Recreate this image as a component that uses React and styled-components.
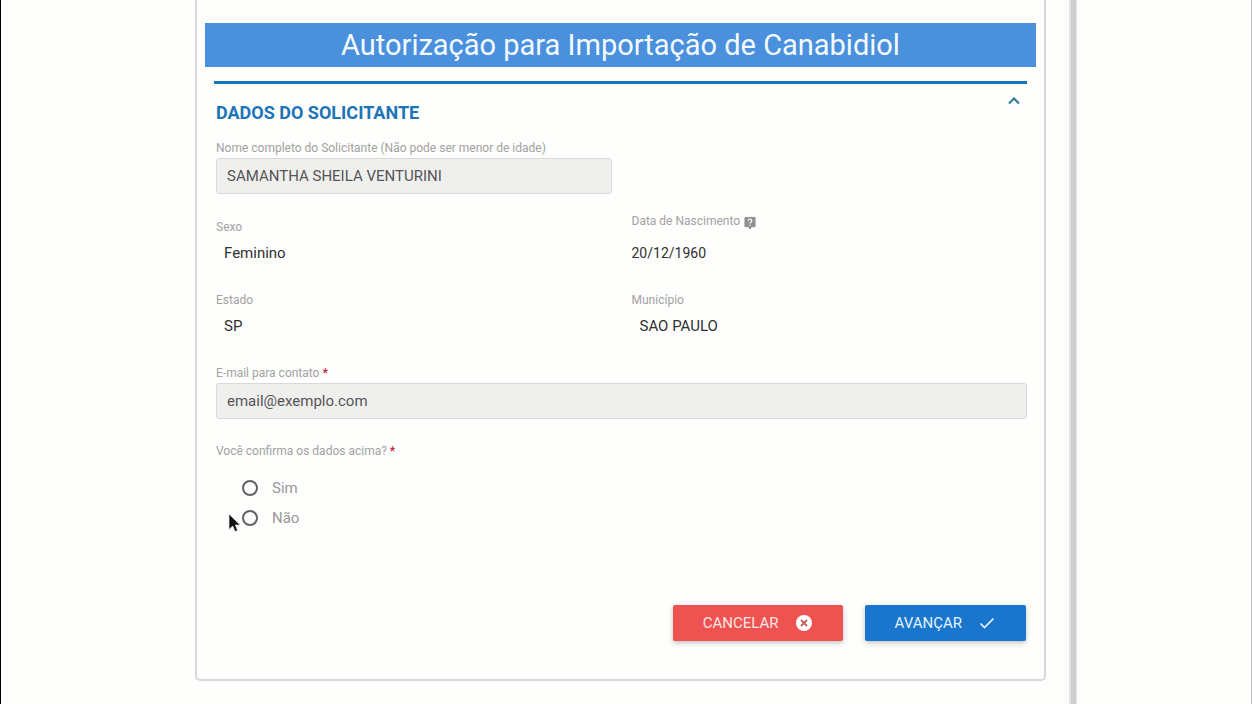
import React, { useState } from "react";
import styled, { createGlobalStyle } from "styled-components";

const GlobalStyle = createGlobalStyle`
  *, *::before, *::after { box-sizing: border-box; }
  body {
    margin: 0;
    background: #fefefd;
    color: #303030;
    font-family: Roboto, "Liberation Sans", sans-serif;
    font-size: 15px;
  }
`;

const Page = styled.div`
  display: grid;
  grid-template-columns: minmax(0, 1fr) 8px 174px;
  min-height: 100vh;
  border-left: 1px solid #000;
  border-right: 1px solid #c4c4c4;
`;

const Main = styled.main`
  padding: 0 23px 24px 194px;
`;

const Divider = styled.div`
  background: #cfcfcf;
  border-left: 2px solid #e2e2e2;
  border-right: 1px solid #e2e2e2;
`;

const Card = styled.form`
  border: 2px solid #d8d8d8;
  border-top: 0;
  border-radius: 0 0 5px 5px;
  padding: 23px 8px 38px;
`;

const Banner = styled.h1`
  margin: 0 0 14px;
  background: #4a90dd;
  color: #f4fbff;
  font-size: 29px;
  font-weight: 400;
  line-height: 44px;
  text-align: center;
`;

const Section = styled.section`
  margin: 0 9px;
  border-top: 3px solid #1a74bd;
`;

const SectionHeader = styled.div`
  display: flex;
  justify-content: space-between;
  align-items: flex-start;
  height: 56px;
  padding: 8px 4px 0 2px;
`;

const SectionTitle = styled.h2`
  margin: 9px 0 0;
  color: #1c74b8;
  font-size: 18px;
  font-weight: 700;
  line-height: 24px;
`;

const CollapseButton = styled.button`
  display: flex;
  padding: 0;
  border: 0;
  background: none;
  color: #2d76a0;
  cursor: pointer;
`;

const Fields = styled.div`
  display: grid;
  grid-template-columns: 1fr 1fr;
  column-gap: 20px;
  padding-left: 2px;
`;

const Field = styled.div`
  display: flex;
  flex-direction: column;
  justify-content: flex-end;
  grid-column: ${(p) => (p.$wide ? "1 / -1" : "auto")};
  margin-bottom: ${(p) => (p.$input ? 24 : 29)}px;
`;

const NameFields = styled(Fields)`
  margin-bottom: -5px;
`;

const labelText = `
  color: #a2a2a2;
  font-size: 12px;
  line-height: 16px;
`;

const Label = styled.label`
  ${labelText}
  margin-bottom: 2px;
`;

const Term = styled.div`
  ${labelText}
  display: flex;
  gap: 4px;
  margin-bottom: ${(p) => (p.$help ? 12 : 8)}px;
  svg { margin: 3px 0 1px; }
`;

const Value = styled.div`
  font-size: ${(p) => (p.$date ? 14 : 15)}px;
  line-height: 20px;
  padding-left: ${(p) => (p.$indent ? 8 : 0)}px;
`;

const TextInput = styled.input`
  width: 100%;
  height: 36px;
  padding: 0 10px;
  border: 1px solid #d9d9d9;
  border-radius: 3px;
  background: #efefee;
  color: #555;
  font: inherit;
  outline: 0;
`;

const Required = styled.span`
  color: #c3283f;
  font-weight: 700;
`;

const Choices = styled.fieldset`
  position: relative;
  margin: 0;
  padding: 0 0 0 2px;
  border: 0;
  min-width: 0;
`;

const Legend = styled.legend`
  ${labelText}
  padding: 0;
  margin-bottom: 14px;
`;

const Choice = styled.label`
  display: flex;
  align-items: center;
  gap: 14px;
  height: 30px;
  padding-left: 26px;
  color: #999;
`;

const Radio = styled.input`
  appearance: none;
  width: 16px;
  height: 16px;
  margin: 0;
  border: 2px solid #626262;
  border-radius: 50%;
  &:checked { box-shadow: inset 0 0 0 3px #fff; background: #1976cb; }
`;

const Pointer = styled.svg`
  position: absolute;
  left: 14px;
  bottom: 0;
`;

const Actions = styled.div`
  display: flex;
  justify-content: flex-end;
  gap: 22px;
  padding: 72px 1px 0;
`;

const Action = styled.button`
  display: flex;
  align-items: center;
  justify-content: center;
  gap: 16px;
  height: 36px;
  padding: 0 30px;
  border: 0;
  border-radius: 2px;
  background: ${(p) => (p.$danger ? "#ee5251" : "#1976cc")};
  color: ${(p) => (p.$danger ? "#fde6e4" : "#e4f3ff")};
  font: inherit;
  cursor: pointer;
  box-shadow: 0 2px 5px rgba(0, 0, 0, 0.24);
`;

const HelpIcon = () => (
  <svg width="12" height="14" viewBox="0 0 13 14" aria-label="Ajuda" role="img">
    <path d="M1 1h11v10H8.200L6.500 13.500 4.800 11H1z" fill="#909090" stroke="#909090" strokeLinejoin="round" />
    <path d="M4.600 4.600a1.900 1.900 0 1 1 2.900 1.600q-1 .6-1 1.300" fill="none" stroke="#fff" strokeWidth="1.300" />
    <circle cx="6.500" cy="9.300" r=".8" fill="#fff" />
  </svg>
);

export default function App() {
  const [open, setOpen] = useState(true);
  return (
    <>
      <GlobalStyle />
      <Page>
        <Main>
          <Card onSubmit={(e) => e.preventDefault()}>
            <Banner>Autorização para Importação de Canabidiol</Banner>
            <Section>
              <SectionHeader>
                <SectionTitle>DADOS DO SOLICITANTE</SectionTitle>
                <CollapseButton type="button" aria-label="Recolher seção" aria-expanded={open} onClick={() => setOpen(!open)}>
                  <svg width="18" height="18" viewBox="0 0 18 18" fill="none" stroke="currentColor" strokeWidth="2">
                    <path d="M4 11.500 9 6.500l5 5" />
                  </svg>
                </CollapseButton>
              </SectionHeader>
              {open && (
                <>
                  <NameFields>
                    <Field $input>
                      <Label htmlFor="nome">Nome completo do Solicitante (Não pode ser menor de idade)</Label>
                      <TextInput id="nome" readOnly value="SAMANTHA SHEILA VENTURINI" />
                    </Field>
                  </NameFields>
                  <Fields>
                    <Field>
                      <Term>Sexo</Term>
                      <Value $indent>Feminino</Value>
                    </Field>
                    <Field>
                      <Term $help>Data de Nascimento <HelpIcon /></Term>
                      <Value $date>20/12/1960</Value>
                    </Field>
                    <Field>
                      <Term>Estado</Term>
                      <Value $indent>SP</Value>
                    </Field>
                    <Field>
                      <Term>Município</Term>
                      <Value $indent>SAO PAULO</Value>
                    </Field>
                    <Field $wide $input>
                      <Label htmlFor="email">E-mail para contato <Required>*</Required></Label>
                      <TextInput id="email" type="email" readOnly value="email@exemplo.com" />
                    </Field>
                  </Fields>
                  <Choices>
                    <Legend>Você confirma os dados acima? <Required>*</Required></Legend>
                    <Choice><Radio type="radio" name="confirma" value="sim" />Sim</Choice>
                    <Choice><Radio type="radio" name="confirma" value="nao" />Não</Choice>
                    <Pointer width="13" height="20" viewBox="0 0 13 20" aria-hidden="true">
                      <path d="M1 1v15.500l3.700-3.400 2.400 5.400 2.600-1.100-2.400-5.300h4.900z" fill="#111" stroke="#ddd" strokeWidth=".8" />
                    </Pointer>
                  </Choices>
                </>
              )}
              <Actions>
                <Action type="button" $danger>
                  CANCELAR
                  <svg width="18" height="18" viewBox="0 0 18 18">
                    <circle cx="9" cy="9" r="8" fill="#fff" />
                    <path d="m6 6 6 6m0-6-6 6" stroke="#d0605f" strokeWidth="2" />
                  </svg>
                </Action>
                <Action type="submit">
                  AVANÇAR
                  <svg width="18" height="18" viewBox="0 0 18 18" fill="none" stroke="#e8f5ff" strokeWidth="1.700">
                    <path d="m2.500 9.500 4 4L15.500 4.500" />
                  </svg>
                </Action>
              </Actions>
            </Section>
          </Card>
        </Main>
        <Divider />
      </Page>
    </>
  );
}
